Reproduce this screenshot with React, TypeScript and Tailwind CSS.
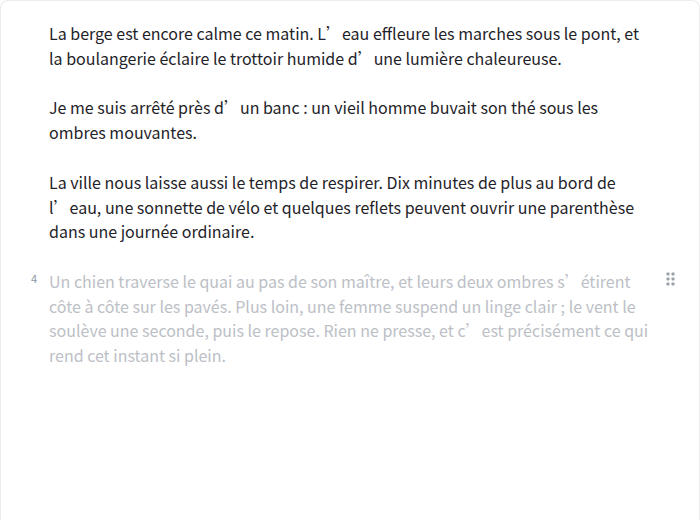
import React from "react";

const paragraphs = [
  "La berge est encore calme ce matin. L’eau effleure les marches sous le pont, et la boulangerie éclaire le trottoir humide d’une lumière chaleureuse.",
  "Je me suis arrêté près d’un banc : un vieil homme buvait son thé sous les ombres mouvantes.",
  "La ville nous laisse aussi le temps de respirer. Dix minutes de plus au bord de l’eau, une sonnette de vélo et quelques reflets peuvent ouvrir une parenthèse dans une journée ordinaire.",
];

const draft =
  "Un chien traverse le quai au pas de son maître, et leurs deux ombres s’étirent côte à côte sur les pavés. Plus loin, une femme suspend un linge clair ; le vent le soulève une seconde, puis le repose. Rien ne presse, et c’est précisément ce qui rend cet instant si plein.";

function DragHandle() {
  return (
    <svg width="10" height="14" viewBox="0 0 10 14" className="text-[#9aa0a8]">
      {[1.5, 6.5].map((x) =>
        [2, 7, 12].map((y) => <rect key={`${x}-${y}`} x={x} y={y - 1.5} width="3" height="3" rx="0.8" fill="currentColor" />)
      )}
    </svg>
  );
}

export default function App() {
  return (
    <div className="h-[520px] overflow-hidden bg-white" style={{ fontFamily: '"Noto Sans CJK SC", "Noto Sans", sans-serif' }}>
      <div className="h-full w-[700px] rounded-t-lg border-x border-t border-[#ececec] bg-white pt-[20px]">
        <div className="flex flex-col gap-[25px]">
          {paragraphs.map((p, i) => (
            <div key={i} className="grid grid-cols-[48px_600px_1fr]">
              <div />
              <p className="text-[16px] leading-[24.7px] text-[#1f2329]">{p}</p>
              <div />
            </div>
          ))}
          <div className="grid grid-cols-[48px_600px_1fr]">
            <div className="pr-[12px] pt-[2px] text-right text-[11px] leading-[14px] text-[#8f959e]">4</div>
            <p className="text-[16px] leading-[24.7px] text-[#bcc0c6]">{draft}</p>
            <div className="pl-[16px] pt-[3px]">
              <DragHandle />
            </div>
          </div>
        </div>
      </div>
    </div>
  );
}
